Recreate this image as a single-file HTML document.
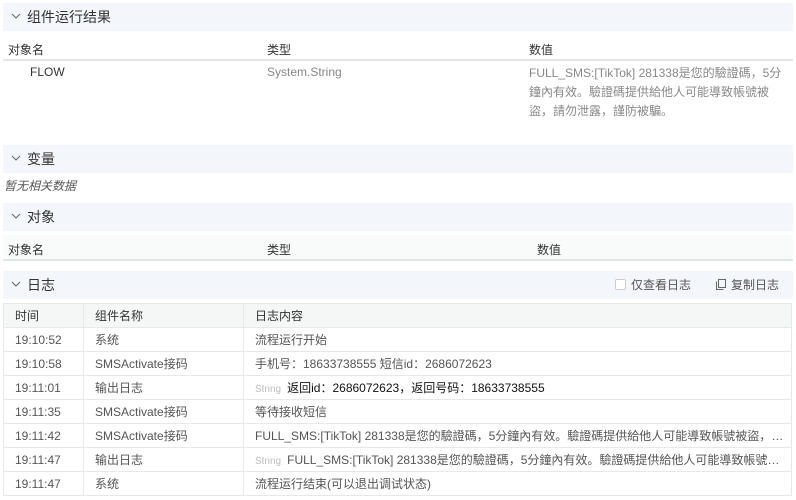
<!DOCTYPE html>
<html><head><meta charset="utf-8"><style>
*{margin:0;padding:0;box-sizing:border-box}
body{width:796px;height:500px;background:#fff;font-family:"Liberation Sans","Noto Sans CJK SC",sans-serif;font-size:12px;color:#333;position:relative;overflow:hidden}
.a{position:absolute;white-space:nowrap}
.sec{position:absolute;left:3px;width:790px;height:28px;background:#f3f6fb;font-size:14px;color:#333;line-height:28px;padding-left:24px}
.sec svg{position:absolute;left:8px;top:10px}
.th{position:absolute;left:3px;width:790px;height:26px;border-bottom:2px solid #e2e4e6}
table{position:absolute;left:3px;top:303px;width:789px;border-collapse:collapse;table-layout:fixed}
td{border:1px solid #e6e8ea;height:24px;padding:0 0 0 11px;white-space:nowrap;overflow:hidden;text-overflow:ellipsis;color:#555}
td:first-child{padding-left:11px}
tr.h td{background:#f5f7f7;color:#333;height:24px}
.s{font-size:10px;color:#bbb;margin-right:6px}
.k{color:#111}
</style></head><body>
<div class="sec" style="top:3px"><svg width="10" height="6" viewBox="0 0 10 6"><path d="M1 1l4 4 4-4" stroke="#666" fill="none"/></svg>组件运行结果</div>
<div class="th" style="top:35px;background:#fff"></div>
<div class="a" style="left:8px;top:41px">对象名</div>
<div class="a" style="left:267px;top:41px">类型</div>
<div class="a" style="left:529px;top:41px">数值</div>
<div class="a" style="left:30px;top:65px;color:#333">FLOW</div>
<div class="a" style="left:267px;top:65px;color:#888">System.String</div>
<div class="a" style="left:529px;top:64px;color:#888;line-height:19px;white-space:normal;width:262px">FULL_SMS:[TikTok] 281338是您的驗證碼，5分鐘內有效。驗證碼提供給他人可能導致帳號被盜，請勿泄露，謹防被騙。</div>

<div class="sec" style="top:145px"><svg width="10" height="6" viewBox="0 0 10 6"><path d="M1 1l4 4 4-4" stroke="#666" fill="none"/></svg>变量</div>
<div class="a" style="left:4px;top:177px;font-style:italic;color:#555">暂无相关数据</div>

<div class="sec" style="top:203px"><svg width="10" height="6" viewBox="0 0 10 6"><path d="M1 1l4 4 4-4" stroke="#666" fill="none"/></svg>对象</div>
<div class="th" style="top:235px;background:#f9fafa"></div>
<div class="a" style="left:8px;top:241px">对象名</div>
<div class="a" style="left:267px;top:241px">类型</div>
<div class="a" style="left:537px;top:241px">数值</div>

<div class="sec" style="top:271px"><svg width="10" height="6" viewBox="0 0 10 6"><path d="M1 1l4 4 4-4" stroke="#666" fill="none"/></svg>日志</div>
<div class="a" style="left:615px;top:279px;width:11px;height:11px;border:1px solid #ccc;border-radius:2px;background:#fff"></div>
<div class="a" style="left:631px;top:276px;color:#555">仅查看日志</div>
<svg class="a" style="left:716px;top:279px" width="10" height="11" viewBox="0 0 10 11"><rect x="2.5" y="0.5" width="7" height="8" fill="none" stroke="#666"/><path d="M0.5 2.5v8h7" fill="none" stroke="#666"/></svg>
<div class="a" style="left:731px;top:276px;color:#555">复制日志</div>

<table>
<colgroup><col style="width:80px"><col style="width:160px"><col></colgroup>
<tr class="h"><td>时间</td><td>组件名称</td><td>日志内容</td></tr>
<tr><td>19:10:52</td><td>系统</td><td>流程运行开始</td></tr>
<tr><td>19:10:58</td><td>SMSActivate接码</td><td>手机号：18633738555 短信id：2686072623</td></tr>
<tr><td>19:11:01</td><td>输出日志</td><td><span class="s">String</span><span class="k">返回id：2686072623，返回号码：18633738555</span></td></tr>
<tr><td>19:11:35</td><td>SMSActivate接码</td><td>等待接收短信</td></tr>
<tr><td>19:11:42</td><td>SMSActivate接码</td><td>FULL_SMS:[TikTok] 281338是您的驗證碼，5分鐘內有效。驗證碼提供給他人可能導致帳號被盜，請勿泄露，謹防被騙。</td></tr>
<tr><td>19:11:47</td><td>输出日志</td><td><span class="s">String</span><span>FULL_SMS:[TikTok] 281338是您的驗證碼，5分鐘內有效。驗證碼提供給他人可能導致帳號被盜，請勿泄露，謹防被騙。</span></td></tr>
<tr><td>19:11:47</td><td>系统</td><td>流程运行结束(可以退出调试状态)</td></tr>
</table>
</body></html>
